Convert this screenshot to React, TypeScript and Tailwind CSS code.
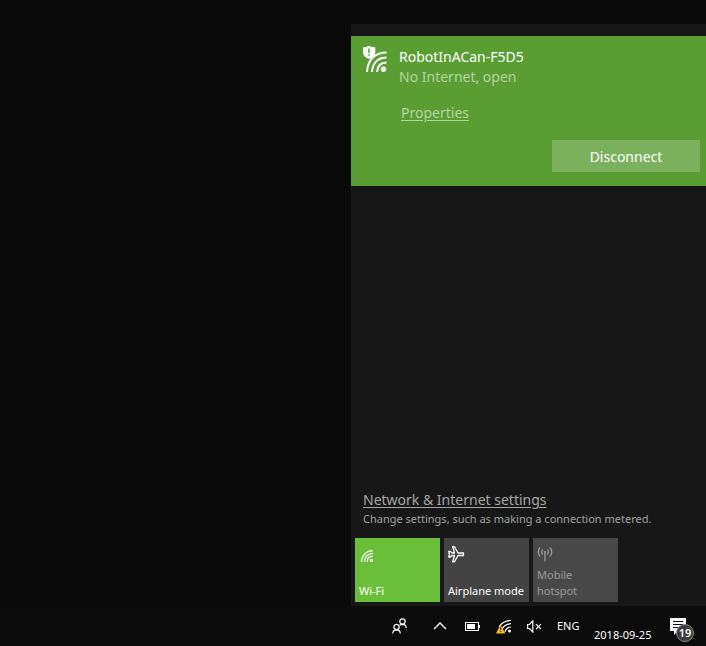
import React from "react";

function WifiArcs({ className }: { className?: string }) {
  return (
    <svg viewBox="0 0 20 20" className={className} fill="none" stroke="currentColor" strokeWidth="2" aria-hidden="true">
      <path d="M1 20C1 9 9 1 20 1" />
      <path d="M5.7 20C5.7 11.5 11.5 5.7 20 5.7" />
      <path d="M10.3 20C10.3 14 14 10.3 20 10.3" />
      <circle cx="17.3" cy="17.3" r="2.6" fill="currentColor" stroke="none" />
    </svg>
  );
}

function OpenNetworkIcon() {
  return (
    <svg viewBox="0 0 24 28" className="h-7 w-6 shrink-0" fill="none" aria-hidden="true">
      <g stroke="#fff" strokeWidth="2">
        <path d="M4 27C4.500 15 12 7.500 23.500 7.500" />
        <path d="M9 27C9.500 18 15 12.500 23.500 12.500" />
        <path d="M14 27C14.500 21 18 17.500 23.500 17.500" />
      </g>
      <circle cx="20.500" cy="24.300" r="2.700" fill="#fff" />
      <path d="M6 0.800C8 2 10 2.300 12.300 2.300V7C12.300 10 10 12.500 6 14C2 12.500 -0.200 10 -0.200 7V2.300C2 2.300 4 2 6 0.800Z" fill="#fff" />
      <path d="M6 3.500V8M6 9.300V10.800" stroke="#5a9e33" strokeWidth="1.500" />
    </svg>
  );
}

function AirplaneIcon() {
  return (
    <svg viewBox="0 0 17 17" className="h-[17px] w-[17px]" fill="none" stroke="#fff" strokeWidth="1.300" strokeLinejoin="round" aria-hidden="true">
      <path d="M0.700 5.500H2.500L4 7H6.500L4.700 0.700H6.500L10 7H15.500V9.500H10L6.500 15.800H4.700L6.500 9.500H4L2.500 11H0.700L1.500 8.250Z" />
    </svg>
  );
}

function HotspotIcon() {
  return (
    <svg viewBox="0 0 16 16" className="h-4 w-4" fill="none" stroke="#a0a0a0" strokeWidth="1.200" aria-hidden="true">
      <path d="M8 6V15.500" />
      <path d="M5.700 3.500Q3.800 6 5.700 8.500M3.200 1.500Q-0.800 6 3.200 10.500M10.300 3.500Q12.200 6 10.300 8.500M12.800 1.500Q16.800 6 12.800 10.500" />
      <circle cx="8" cy="6" r="1" fill="#a0a0a0" stroke="none" />
    </svg>
  );
}

function PeopleIcon() {
  return (
    <svg viewBox="0 0 16 16" className="h-4 w-4" fill="none" stroke="#fff" strokeWidth="1.200" aria-hidden="true">
      <circle cx="10.500" cy="3.500" r="2.700" />
      <circle cx="4.500" cy="9" r="2.700" />
      <path d="M0.700 15.500Q1 11.900 4.500 11.900Q8 11.900 8.300 15.500" />
      <path d="M7.500 7.300Q9 6.300 10.500 6.300Q14 6.400 14.300 10" />
    </svg>
  );
}

function BatteryIcon() {
  return (
    <svg viewBox="0 0 16 10" className="h-[10px] w-4" aria-hidden="true">
      <rect x="0.500" y="1.500" width="13" height="8" fill="none" stroke="#fff" />
      <rect x="2" y="3" width="8" height="5" fill="#fff" />
      <rect x="14" y="4" width="1" height="3" fill="#fff" />
    </svg>
  );
}

function WarningWifiIcon() {
  return (
    <svg viewBox="0 0 16 15" className="h-[15px] w-4" fill="none" aria-hidden="true">
      <g stroke="#fff" strokeWidth="1.200">
        <path d="M3 8Q6.500 1.600 15 1.500" />
        <path d="M6 10Q8.500 5 15 4.700" />
        <path d="M9 13Q10 8.300 15 8" />
      </g>
      <circle cx="13.500" cy="12" r="1.500" fill="#fff" />
      <path d="M4.500 5.500L9.300 14.500H0Z" fill="#fdb913" />
      <path d="M4.600 8V11M4.600 12V13" stroke="#222" strokeWidth="1.100" />
    </svg>
  );
}

function MutedIcon() {
  return (
    <svg viewBox="0 0 15 13" className="h-[13px] w-[15px]" fill="none" stroke="#fff" strokeWidth="1.200" aria-hidden="true">
      <path d="M0.600 4.500H2.500L5.800 1V12L2.500 8.500H0.600Z" />
      <path d="M9 4.200L14 9.200M14 4.200L9 9.200" />
    </svg>
  );
}

function ActionCenterIcon() {
  return (
    <svg viewBox="0 0 16 17" className="h-[17px] w-4" aria-hidden="true">
      <path d="M0 0H16V13H8L4 17V13H0Z" fill="#fff" />
      <path d="M3 3.500H13M3 6.500H13M3 9.500H10" stroke="#0c0c0c" />
    </svg>
  );
}

function NetworkCard() {
  return (
    <section className="bg-[#5a9e33] pt-[9px] pr-1.5 pb-[14px] pl-3">
      <div className="flex gap-3">
        <OpenNetworkIcon />
        <div className="pt-0.5 text-sm leading-5">
          <h1 className="text-white">RobotInACan-F5D5</h1>
          <p className="text-[#b4d4a2]">No Internet, open</p>
        </div>
      </div>
      <a href="#properties" className="mt-4 ml-[38px] inline-block text-sm leading-5 text-[#b4d4a2] underline underline-offset-2">
        Properties
      </a>
      <div className="mt-4 flex justify-end">
        <button type="button" className="h-8 w-[148px] bg-[#7bb15c] pt-0.5 text-sm text-white">
          Disconnect
        </button>
      </div>
    </section>
  );
}

function QuickActions() {
  const tile = "flex h-16 w-[85px] flex-col items-start justify-between px-1 pt-2 pb-[3px] text-left text-[11px] leading-4 whitespace-nowrap";
  return (
    <div className="flex gap-1 px-1 pb-1">
      <button type="button" aria-pressed="true" className={`${tile} bg-[#6abf3a] text-white`}>
        <span className="pt-1 pl-0.5">
          <WifiArcs className="h-3 w-3" />
        </span>
        Wi-Fi
      </button>
      <button type="button" aria-pressed="false" className={`${tile} bg-[#434343] text-white`}>
        <AirplaneIcon />
        Airplane mode
      </button>
      <button type="button" disabled className={`${tile} bg-[#484848] text-[#9a9a9a]`}>
        <HotspotIcon />
        <span>
          Mobile
          <br />
          hotspot
        </span>
      </button>
    </div>
  );
}

function Taskbar() {
  return (
    <footer className="flex h-10 items-center justify-end bg-[#0b0b0b] pr-3 text-[11px] leading-4 text-white">
      <button type="button" aria-label="People" className="mr-[25px]">
        <PeopleIcon />
      </button>
      <button type="button" aria-label="Show hidden icons" className="mr-[18px]">
        <svg viewBox="0 0 14 8" className="h-2 w-[14px]" fill="none" stroke="#fff" strokeWidth="1.400" aria-hidden="true">
          <path d="M1 7L7 1L13 7" />
        </svg>
      </button>
      <button type="button" aria-label="Battery" className="mr-[15px]">
        <BatteryIcon />
      </button>
      <button type="button" aria-label="Network" className="mr-[15px]">
        <WarningWifiIcon />
      </button>
      <button type="button" aria-label="Volume muted" className="mr-[15px]">
        <MutedIcon />
      </button>
      <button type="button" className="mr-3 w-[25px] text-left">ENG</button>
      <time dateTime="2018-09-25" className="mt-[18px] mr-4 w-[60px] whitespace-nowrap">2018-09-25</time>
      <button type="button" aria-label="Notifications" className="relative mr-2">
        <ActionCenterIcon />
        <span className="absolute top-[6px] left-[6px] flex h-[18px] w-[18px] items-center justify-center rounded-full border border-[#8a8a8a] bg-[#3c3c3c] text-[11px] font-semibold">
          19
        </span>
      </button>
    </footer>
  );
}

export default function App() {
  return (
    <div className="flex min-h-screen flex-col bg-[#090909] font-['Noto_Sans','Open_Sans',sans-serif]">
      <main className="flex grow justify-end pt-6">
        <div className="flex w-[355px] flex-col bg-[#171717] pt-3">
          <NetworkCard />
          <div className="mt-auto px-3 pb-[11px]">
            <a href="#settings" className="inline-block text-sm leading-5 text-[#a6a6a6] underline underline-offset-2">
              Network &amp; Internet settings
            </a>
            <p className="text-[11px] leading-4 text-[#a0a0a0]">Change settings, such as making a connection metered.</p>
          </div>
          <QuickActions />
        </div>
      </main>
      <Taskbar />
    </div>
  );
}
